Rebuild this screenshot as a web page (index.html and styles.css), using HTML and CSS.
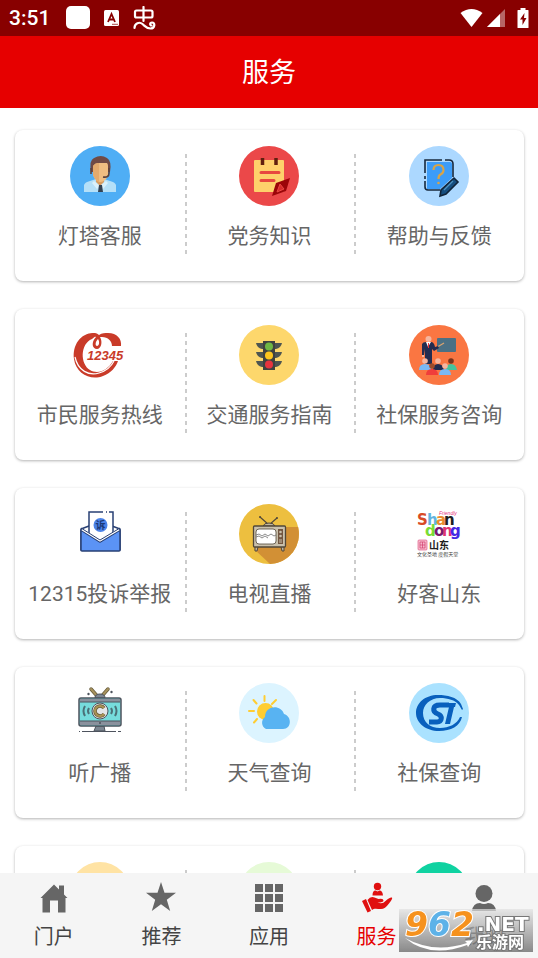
FILE: index.html
```html
<!DOCTYPE html>
<html lang="zh-CN">
<head>
    <meta charset="UTF-8">
    <meta name="viewport" content="width=device-width, initial-scale=1.0">
    <title>服务</title>
    <link rel="stylesheet" href="styles.css">
</head>
<body>
    <div class="status">
        <div class="status-left">
            <span class="time">3:51</span>
            <svg width="28" height="24" viewBox="0 0 28 24"><rect x="3" width="24" height="23" rx="5" fill="#fff"/></svg>
            <svg width="16" height="16" viewBox="0 0 16 16">
                <rect width="15" height="16" rx="1.5" fill="#fff"/>
                <path d="M4 12 7.5 4 11 12M5.3 9.5h4.500" fill="none" stroke="#880000" stroke-width="1.8"/>
                <path d="M8 14.3h6" stroke="#880000" stroke-width=".7"/>
            </svg>
            <svg width="23" height="24" viewBox="0 0 23 24" fill="none" stroke="#fff" stroke-width="2.2" stroke-linecap="round" stroke-linejoin="round">
                <path d="M10.5 1v14M3.5 4.500H18q1.5 0 1.5 1.5v4q0 1.5-1.5 1.5H3.500Q2 11.500 2 10V6q0-1.500 1.500-1.500M1.500 22c0-5 5-6.500 8-4s4 4.500 8 4.500c4.500 0 5-6 1.500-6-2.500 0-2.300 3-.5 3"/>
            </svg>
        </div>
        <div class="status-right">
            <svg width="23" height="20" viewBox="0 0 23 20"><path d="M.5 5Q11.5-3 22.5 5L11.5 19z" fill="#fff"/></svg>
            <svg width="18" height="20" viewBox="0 0 18 20"><path d="M0 19 18 1v18z" fill="#fff" opacity=".4"/><path d="M0 19 13 6v13z" fill="#fff"/></svg>
            <svg width="12" height="20" viewBox="0 0 12 20"><path d="M3.5 0h5v2H11q.5 0 .5.5v17q0 .5-.5.5H1q-.5 0-.5-.5v-17Q.5 2 1 2h2.500z" fill="#fff"/><path d="M7.5 5 3 11.5h2.500V17L9.500 10H7z" fill="#880000"/></svg>
        </div>
    </div>
    <header class="header">
        <h1>服务</h1>
    </header>

    <main class="content">
        <section class="card">
            <a class="item" href="#">
                <svg class="icon" viewBox="0 0 60 60">
                    <circle cx="30" cy="30" r="30" fill="#4faef5"/>
                    <path d="M14 46v-7q1-3 6-4l6-2h8l6 2q5 1 6 4v7z" fill="#b5e0f8"/>
                    <path d="M26 31h8v5l-4 4-4-4z" fill="#d99d61"/>
                    <path d="m24 35 6 5 6-5 2 2-5 6-3-3-3 3-5-6z" fill="#daf1fc"/>
                    <path d="M29 39h3l1 7h-5z" fill="#344253"/>
                    <path d="M21 26q-2-12 3-14 7-4 13 0 5 3 3 14z" fill="#704a46"/>
                    <path d="M23 20q2-3 5-3h9q1 1 1 3v9q-2 7-8 7-5-1-7-7z" fill="#efbd82"/>
                    <path d="M23 20q2-3 5-3h1v19q-4-2-6-7z" fill="#e4aa6d"/>
                    <path d="M21 22v6M39 22v5q0 5-6 4" fill="none" stroke="#5b423e" stroke-width="1.6"/>
                </svg>
                <span>灯塔客服</span>
            </a>
            <a class="item" href="#">
                <svg class="icon" viewBox="0 0 60 60">
                    <circle cx="30" cy="30" r="30" fill="#eb4849"/>
                    <rect x="15" y="14" width="30" height="32" rx="1" fill="#fed16b"/>
                    <path d="M23.5 12v7M37 12v7" stroke="#60200e" stroke-width="3.5"/>
                    <path d="M22 26.5h18M22 34.5h13" stroke="#e8483f" stroke-width="3" stroke-linecap="round"/>
                    <path d="m51 32-14 5-4 13 14-5z" fill="#9c0509"/>
                    <path d="m41 38 4 5-7 3z" fill="#d72a2b" stroke="#ec4a43" stroke-width="1"/>
                </svg>
                <span>党务知识</span>
            </a>
            <a class="item" href="#">
                <svg class="icon" viewBox="0 0 60 60">
                    <circle cx="30" cy="30" r="30" fill="#acd8ff"/>
                    <path d="M18 16h23q2 0 2 2v14L31 43H18z" fill="#3c9cf8"/>
                    <path d="M33 14H16v13M16 30v3M16 35v6q0 3 3 3h12M36 14h4q4 0 4 4v13" fill="none" stroke="#17283d" stroke-width="1.6"/>
                    <path d="M24.5 24q0-5 5-5t5 5q0 3-3 4.5-2 1-2 4.5" fill="none" stroke="#d9a446" stroke-width="2.2"/>
                    <circle cx="29.5" cy="37" r="1.3" fill="#d9a446"/>
                    <path d="m45 32 4 4-12 12-6 2 1-6z" fill="#164e80" stroke="#10243a" stroke-width="1.6"/>
                    <path d="m35 44 9-9" stroke="#4d91bf" stroke-width="1.2"/>
                </svg>
                <span>帮助与反馈</span>
            </a>
        </section>

        <section class="card">
            <a class="item" href="#">
                <svg class="icon" viewBox="0 0 60 60">
                    <path d="M25 8C11 7 2 20 4 34c2 15 17 22 29 17 8-3 13-9 15-15h-5c-5 9-15 14-23 9C10 39 10 19 22 14l5-4z" fill="#c93b29"/>
                    <path d="M5 32c3 14 14 19 24 16 7-2 12-6 15-12" fill="none" stroke="#fff" stroke-width="1.2"/>
                    <path d="M20 9c4-2 7-1 9 1 3-2 6-2 9-2 9 0 14 6 13 13h-9c0-5-4-9-10-9h-2c3 5 1 12-3 12-5 0-6-7-1-12z" fill="#c93b29"/>
                    <path d="M28 14c2 3 1 7-1 7s-2-4 1-7z" fill="#fff"/>
                    <text class="hotline" x="17" y="35">12345</text>
                </svg>
                <span>市民服务热线</span>
            </a>
            <a class="item" href="#">
                <svg class="icon" viewBox="0 0 60 60">
                    <circle cx="30" cy="30" r="30" fill="#fdd76c"/>
                    <path d="M17 18h26q-1 5-6 6H23q-5-1-6-6zM17 27h26q-1 5-6 6H23q-5-1-6-6zM17 36h26q-1 5-6 6H23q-5-1-6-6z" fill="#4e5551"/>
                    <rect x="24" y="16" width="12" height="29" fill="#40423f"/>
                    <circle cx="30" cy="21.5" r="4" fill="#6fb744"/>
                    <circle cx="30" cy="30.5" r="4" fill="#fdc51e"/>
                    <circle cx="30" cy="39.5" r="4" fill="#e7343e"/>
                </svg>
                <span>交通服务指南</span>
            </a>
            <a class="item" href="#">
                <svg class="icon" viewBox="0 0 60 60">
                    <circle cx="30" cy="30" r="30" fill="#fa7642"/>
                    <rect x="28" y="13" width="19" height="14" rx="1" fill="#4b7084"/>
                    <path d="m25 24 10-6" stroke="#dba46f" stroke-width="1.2"/>
                    <path d="M13 30V19q1-2 4-2h5q3 0 4 5l3-1 1 2-5 3-2-2v15h-7V24l-1 6z" fill="#222c50"/>
                    <path d="m17 17 2 5 3-5z" fill="#fff"/><path d="M19 18h1v5h-1z" fill="#e7343e"/>
                    <circle cx="19.5" cy="14" r="3" fill="#f5b6a0"/>
                    <path d="M13 31h2" stroke="#f5b6a0" stroke-width="2"/>
                    <path d="M10 45q0-6 6-6t6 6z" fill="#7ab8f5"/>
                    <path d="M24 45q0-6 5-6t6 6z" fill="#222c50"/>
                    <path d="M37 45q0-6 5-6t6 6z" fill="#45c39c"/>
                    <circle cx="16" cy="36" r="2.8" fill="#f5b6a0"/><circle cx="29" cy="36" r="2.8" fill="#f5b6a0"/><circle cx="42" cy="36" r="2.8" fill="#79341e"/>
                    <path d="M17 50q0-6 6-6t6 6z" fill="#f03d3b"/><path d="M30 50q0-6 6-6t6 6z" fill="#7ab8f5"/>
                    <circle cx="23" cy="41" r="2.8" fill="#9b4b2c"/><circle cx="36" cy="41" r="2.8" fill="#f5b6a0"/>
                </svg>
                <span>社保服务咨询</span>
            </a>
        </section>

        <section class="card">
            <a class="item" href="#">
                <svg class="icon" viewBox="0 0 60 60">
                    <path d="m11 25 8-3h23l8 3v21H11z" fill="#fff" stroke="#294074" stroke-width="1.5" stroke-linejoin="round"/>
                    <path d="M19 35V8h14M36 8h1M39 8h4v27" fill="#fff" stroke="#294074" stroke-width="1.5"/>
                    <path d="M20 9h22v25H20z" fill="#fff"/>
                    <path d="m11 26 19 12 20-12v20q0 1-1 1H12q-1 0-1-1z" fill="#5b93f5" stroke="#294074" stroke-width="1.5" stroke-linejoin="round"/>
                    <path d="m12 25.500 18 11 19-11" fill="none" stroke="#fff" stroke-width="2"/>
                    <path d="m11 24 19 12 20-12" fill="none" stroke="#294074" stroke-width="1"/>
                    <circle cx="30.5" cy="21" r="7" fill="#4c83e8"/>
                    <text class="seal" x="30.5" y="25">诉</text>
                </svg>
                <span>12315投诉举报</span>
            </a>
            <a class="item" href="#">
                <svg class="icon" viewBox="0 0 60 60">
                    <circle cx="30" cy="30" r="30" fill="#edbf3f"/>
                    <path d="M47 23h12.100A30 30 0 0 1 31 60L15 45z" fill="#d29035"/>
                    <path d="m21 13 9 8 8-7" fill="none" stroke="#504739" stroke-width="1.2"/>
                    <circle cx="21" cy="13" r="1" fill="#504739"/><circle cx="38" cy="14" r="1" fill="#504739"/>
                    <path d="M24 22q1-3 6-3t6 3z" fill="#c2b69e" stroke="#504739"/>
                    <path d="M16 43v4h2l1-4M42 43l1 4h2v-4" fill="#c2b69e" stroke="#504739"/>
                    <rect x="14.5" y="22" width="32" height="21" rx="1" fill="#c9c0ac" stroke="#504739" stroke-width="1.3"/>
                    <rect x="17" y="25" width="20" height="15" rx="3" fill="#fff" stroke="#504739" stroke-width=".8"/>
                    <path d="m17 31 3-1 3 2 3-2 3 2 3-2 3 2 2-1M17 33l3-1 3 2 3-2 3 2" fill="none" stroke="#6f6f6f" stroke-width=".8"/>
                    <rect x="39" y="25" width="5" height="15" fill="#725640"/>
                    <circle cx="41.5" cy="28" r="1.3" fill="#c9c0ac"/><circle cx="41.5" cy="32" r="1.3" fill="#c9c0ac"/>
                    <path d="M40 36h3M40 38h3" stroke="#c9c0ac"/>
                </svg>
                <span>电视直播</span>
            </a>
            <a class="item" href="#">
                <svg class="icon" viewBox="0 0 60 60">
                    <text class="brush" y="21"><tspan x="8" fill="#d84a25">S</tspan><tspan x="18" fill="#62b4df">h</tspan><tspan x="27" fill="#ea8b2e">a</tspan><tspan x="35" fill="#202020">n</tspan></text>
                    <text class="brush" y="32"><tspan x="16" fill="#79dc35">d</tspan><tspan x="25" fill="#7a176f">o</tspan><tspan x="33" fill="#e03470">n</tspan><tspan x="41" fill="#4528e3">g</tspan></text>
                    <text class="friendly" x="30" y="11">Friendly</text>
                    <rect x="9" y="36" width="9" height="10" rx="1" fill="#f6b8ca" stroke="#df5f8b" stroke-width=".7"/>
                    <path d="M11 38h5v6h-5zM11 41h5M13.5 38v6" fill="none" stroke="#d23c70" stroke-width=".7"/>
                    <text class="shandong" x="20" y="45">山东</text>
                    <text class="slogan" x="8" y="52">文化圣地 度假天堂</text>
                </svg>
                <span>好客山东</span>
            </a>
        </section>

        <section class="card">
            <a class="item" href="#">
                <svg class="icon" viewBox="0 0 60 60">
                    <path d="m21 6 7 8M38 6l-7 8" stroke="#655a3b" stroke-width="3.5" stroke-linecap="round"/>
                    <path d="m21 6 7 8M38 6l-7 8" stroke="#a7925d" stroke-width="2" stroke-linecap="round"/>
                    <circle cx="18.5" cy="11" r="1.2" fill="#4d535d"/><circle cx="41.5" cy="9" r="1.2" fill="#4d535d"/>
                    <path d="M25 15q0-4 5-4t5 4zM26 43h8l1 5H24z" fill="#7d8792" stroke="#4d535d"/>
                    <rect x="9" y="15" width="42" height="28" rx="2" fill="#76dcdc" stroke="#4d535d" stroke-width="1.5"/>
                    <path d="M10 16h40v3H10zM10 38h40v4H10z" fill="#8a919d"/>
                    <path d="M10 19h40M10 38h40" stroke="#4d535d"/>
                    <circle cx="30" cy="28" r="8" fill="#e4e6e8" stroke="#4d535d"/>
                    <path d="M34 25a5 5 0 1 0 0 6" fill="none" stroke="#665937" stroke-width="3.6"/>
                    <path d="M34 25a5 5 0 1 0 0 6" fill="none" stroke="#aa9355" stroke-width="2.2"/>
                    <path d="M15 23q-3 5 0 10M19 25q-2 3 0 6M45 23q3 5 0 10M41 25q2 3 0 6" fill="none" stroke="#4b7178" stroke-width="2"/>
                    <circle cx="30" cy="40" r="1" fill="#4d535d"/>
                    <path d="M9 48.5h1M12 48.5h34M48 48.5h3" stroke="#4d535d" stroke-width="1"/>
                </svg>
                <span>听广播</span>
            </a>
            <a class="item" href="#">
                <svg class="icon" viewBox="0 0 60 60">
                    <circle cx="30" cy="30" r="30" fill="#dcf4ff"/>
                    <path d="M25.5 13v5M14.5 17l3 3.500M10 28h5M15 39.500l3-3.500M37 17l-4 4" stroke="#ffcd32" stroke-width="2" stroke-linecap="round"/>
                    <circle cx="26.5" cy="28.5" r="8.5" fill="#ffcd32"/>
                    <path d="M27 46a7 7 0 0 1-1-12c0-12 16-13 19-3 8 2 8 15-1 15z" fill="#58b3f2"/>
                </svg>
                <span>天气查询</span>
            </a>
            <a class="item" href="#">
                <svg class="icon" viewBox="0 0 60 60">
                    <circle cx="30" cy="30" r="30" fill="#aae2ff"/>
                    <path d="M52 21C48 14 38 12 29 12 16 12 7 20 7 30s10 18 23 18c12 0 21-5 23-14h-2c-3 7-11 11-20 11-10 0-17-6-17-15 0-8 7-15 17-15 8 0 15 2 19 7l3 5 1-1z" fill="#0960bd"/>
                    <path d="M40 22H31c-8 0-8 7-2 9 5 2 4 8-1 8h-8" fill="none" stroke="#0960bd" stroke-width="5"/>
                    <path d="M35 20h12l-1 4h-1l-4 17h-5l4-17h-6z" fill="#0960bd"/>
                </svg>
                <span>社保查询</span>
            </a>
        </section>

        <section class="card">
            <a class="item" href="#">
                <svg class="icon" viewBox="0 0 60 60"><circle cx="30" cy="30" r="30" fill="#ffe3a4"/></svg>
            </a>
            <a class="item" href="#">
                <svg class="icon" viewBox="0 0 60 60"><circle cx="30" cy="30" r="30" fill="#e6fad7"/></svg>
            </a>
            <a class="item" href="#">
                <svg class="icon" viewBox="0 0 60 60"><circle cx="30" cy="30" r="30" fill="#0fd2a1"/><path d="M17 13q4-4 8 0zM35 13q4-4 8 0z" fill="#6de7c8"/></svg>
            </a>
        </section>
    </main>

    <nav class="tabs">
        <a href="#">
            <svg viewBox="0 0 32 32"><path d="M16 2.500 21 7.500V3.500h5v9l3.500 3.500h-2v14.500H20V18.500h-8v12H4.500V16h-2z"/></svg>
            <span>门户</span>
        </a>
        <a href="#">
            <svg viewBox="0 0 32 32"><path d="m16 0 3.500 10.700H31l-9.200 7L25.200 29 16 22.200 6.800 29l3.400-11.300L1 10.700h11.500z"/></svg>
            <span>推荐</span>
        </a>
        <a href="#">
            <svg viewBox="0 0 32 32"><path d="M2 2h8v8H2zM12 2h8v8h-8zM22 2h8v8h-8zM2 12h8v8H2zM12 12h8v8h-8zM22 12h8v8h-8zM2 22h8v8H2zM12 22h8v8h-8zM22 22h8v8h-8z"/></svg>
            <span>应用</span>
        </a>
        <a href="#" class="active">
            <svg viewBox="0 0 32 32"><circle cx="16.5" cy="4.5" r="3.7"/><path d="M11.5 13.5q0-5 3-5l2 1 2-1q3 0 3.500 5zM1 19l4-2 5 12-3.500 1.500zM6.500 18q3-4 7-2.500l4 1.500q5-1 5 1.500 0 2-6 2 5 2 8-1.500 4-4 6.500-3.500 1 1-3 6-4 5.500-8 5.500c-4 0-7-1-9 1z"/></svg>
            <span>服务</span>
        </a>
        <a href="#">
            <svg viewBox="0 0 32 32"><circle cx="16" cy="11.5" r="8.5"/><path d="M4 29q1-8 8-8 4 2 8 0 7 0 8 8z"/></svg>
            <span>我的</span>
        </a>
    </nav>

    <div class="watermark">
        <svg width="134" height="43" viewBox="0 0 134 43">
            <path d="M6 29q29 16 62 5l-2-2 8-1-5 7-1-2Q31 50 6 29z" fill="#fff"/>
            <text class="wm-num" x="6" y="27"><tspan fill="#f6921e">9</tspan><tspan fill="#5db2e8">6</tspan><tspan fill="#f6921e">2</tspan></text>
            <text class="wm-net" x="78" y="22">.NET</text>
            <text class="wm-name" x="77" y="39">乐游网</text>
        </svg>
    </div>
</body>
</html>
```

FILE: styles.css
```css
* {
    box-sizing: border-box;
}
body {
    font-family: Roboto, "Noto Sans CJK SC", sans-serif;
    margin: 0;
    height: 100vh;
    display: flex;
    flex-direction: column;
    background-color: #fff;
    color: #666;
}
svg {
    display: block;
}
a {
    color: inherit;
    text-decoration: none;
}
.status {
    flex: none;
    height: 36px;
    padding: 0 9px;
    display: flex;
    justify-content: space-between;
    align-items: center;
    background-color: #880000;
    color: #fff;
}
.status-left {
    display: flex;
    align-items: center;
    gap: 13px;
}
.status-right {
    display: flex;
    align-items: center;
    gap: 4px;
}
.status-right svg:last-child {
    margin-left: 8px;
}
.time {
    font-size: 21px;
    font-weight: 500;
}
.header {
    flex: none;
    height: 72px;
    padding-bottom: 4px;
    display: flex;
    align-items: center;
    justify-content: center;
    background-color: #e60000;
    color: #fff;
}
.header h1 {
    margin: 0;
    font-size: 27px;
    font-weight: 400;
}
.content {
    flex: 1;
    min-height: 0;
    overflow-y: auto;
    scrollbar-width: none;
    padding: 22px 14px 22px 15px;
}
.card {
    display: grid;
    grid-template-columns: repeat(3, 1fr);
    min-height: 151px;
    margin-bottom: 28px;
    border-radius: 8px;
    background-color: #fff;
    box-shadow: 0 1px 3px rgba(0, 0, 0, .3);
}
.item {
    display: flex;
    flex-direction: column;
    align-items: center;
    padding: 16px 0 30px;
    font-size: 21px;
    line-height: 30px;
    white-space: nowrap;
}
/* dashed line between the columns */
.item + .item {
    background: repeating-linear-gradient(#ccc 0 4px, transparent 4px 8px) left 24px / 2px 100px no-repeat;
}
.icon {
    width: 60px;
    height: 60px;
    margin-bottom: 15px;
}
.hotline {
    font: italic bold 13px "Liberation Sans", sans-serif;
    fill: #c93b29;
    stroke: #fff;
    stroke-width: 2px;
    paint-order: stroke;
}
.seal {
    font-size: 10px;
    font-weight: 700;
    text-anchor: middle;
    fill: #1c3978;
}
.brush {
    font: bold 15px "DejaVu Sans", sans-serif;
}
.friendly {
    font: italic 5px "Liberation Sans", sans-serif;
    fill: #e83a83;
}
.shandong {
    font-size: 10px;
    font-weight: 700;
    fill: #202020;
}
.slogan {
    font-size: 5px;
    fill: #444;
}
.tabs {
    flex: none;
    display: flex;
    padding: 9px 0 8px;
    background-color: #f5f5f5;
    color: #444;
}
.tabs a {
    flex: 1;
    display: flex;
    flex-direction: column;
    align-items: center;
    gap: 10px;
    font-size: 20px;
    line-height: 26px;
}
.tabs svg {
    width: 32px;
    height: 32px;
    fill: #666;
}
.tabs a.active {
    color: #e60000;
}
.tabs a.active svg {
    fill: #e01010;
}
.watermark {
    position: fixed;
    right: 5px;
    bottom: 6px;
    background: linear-gradient(rgba(225, 225, 225, .7), rgba(110, 110, 110, .8));
}
.watermark svg {
    overflow: visible;
}
.wm-num {
    font: italic bold 33px "DejaVu Sans", sans-serif;
    stroke: #fff;
    stroke-width: 2px;
    paint-order: stroke;
}
.wm-net {
    font: bold 20px "DejaVu Sans", sans-serif;
    fill: #fff;
    stroke: #777;
    stroke-width: 2px;
    paint-order: stroke;
}
.wm-name {
    font-size: 16px;
    font-weight: 700;
    fill: #fff;
    stroke: #777;
    stroke-width: 2px;
    paint-order: stroke;
}
```
